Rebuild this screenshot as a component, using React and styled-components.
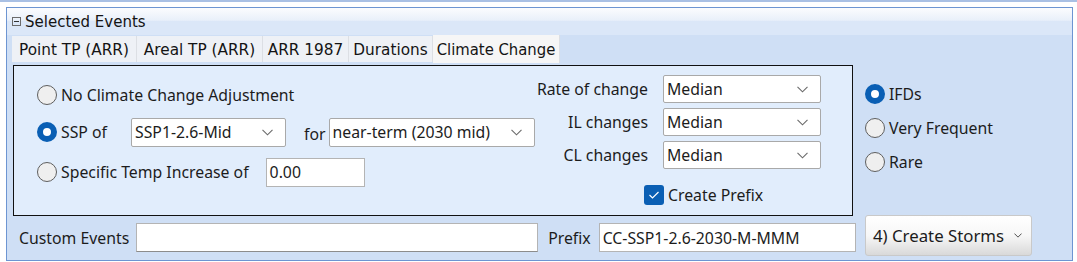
import React from "react";
import styled, { createGlobalStyle } from "styled-components";

const Global = createGlobalStyle`
  html, body { margin: 0; padding: 0; background: #ffffff; }
  body { font-family: "Noto Sans", "Liberation Sans", sans-serif; color: #1c1c1c; }
`;

const Page = styled.div`
  width: 1077px;
  height: 262px;
  border-top: 2px solid #a9c0e4;
  box-sizing: border-box;
  padding: 5px 4px 0 6px;
`;

const Panel = styled.div`
  border: 1px solid #6d95d2;
  height: 254px;
  box-sizing: border-box;
  display: flex;
  flex-direction: column;
  background: #cfdff5;
`;

const Header = styled.div`
  height: 27px;
  display: flex;
  align-items: center;
  gap: 4px;
  padding-left: 5px;
  background: linear-gradient(#fbfcfe 0%, #e9f0fa 45%, #dbe7f8 50%, #dbe7f8 100%);
  font-family: "DejaVu Sans", sans-serif;
  font-size: 15px;
  color: #141414;
`;

const Collapse = styled.span`
  width: 7px;
  height: 7px;
  border: 1px solid #6b6b6b;
  position: relative;
  &::after {
    content: "";
    position: absolute;
    left: 1px;
    right: 1px;
    top: 3px;
    height: 1px;
    background: #333;
  }
`;

const Body = styled.div`
  flex: 1;
  display: flex;
  padding: 1px 0 0 5px;
`;

const Main = styled.div`
  width: 844px;
  display: flex;
  flex-direction: column;
`;

const Tabs = styled.div`
  display: flex;
  height: 26px;
  align-items: stretch;
`;

const Tab = styled.div`
  display: flex;
  align-items: center;
  justify-content: center;
  padding-top: 1px;
  width: ${(p) => p.$w}px;
  box-sizing: border-box;
  font-family: ${(p) => (p.$active ? '"DejaVu Sans Condensed", "DejaVu Sans", sans-serif' : '"DejaVu Sans", sans-serif')};
  font-size: ${(p) => (p.$active ? "16.5px" : "15.3px")};
  background: ${(p) => (p.$active ? "#f6f6f6" : "#eef1f6")};
  border-right: 1px solid #dcdfe4;
  margin-top: ${(p) => (p.$active ? "-1px" : "0")};
  margin-bottom: ${(p) => (p.$active ? "-1px" : "0")};
  color: #141414;
`;

const Box = styled.div`
  margin-top: 3px;
  margin-left: 1px;
  width: 840px;
  height: 151px;
  box-sizing: border-box;
  border: 1.5px solid #111;
  background: #e1edfc;
  display: flex;
  justify-content: space-between;
  font-size: 15.8px;
`;

const LeftOptions = styled.div`
  padding: 14px 0 0 23px;
  display: flex;
  flex-direction: column;
`;

const OptionRow = styled.div`
  display: flex;
  align-items: center;
  height: 30px;
  margin-top: ${(p) => p.$mt || 0}px;
`;

const RadioLabel = styled.label`
  display: flex;
  align-items: center;
  gap: 4px;
  width: ${(p) => (p.$w ? `${p.$w}px` : "auto")};
  margin-right: ${(p) => p.$mr || 0}px;
  white-space: nowrap;
`;

const RadioDot = styled.span`
  width: 20px;
  height: 20px;
  border-radius: 50%;
  box-sizing: border-box;
  flex: none;
  background: ${(p) => (p.$checked ? "#ffffff" : "#efefef")};
  border: ${(p) => (p.$checked ? "6px solid #0a5fb4" : "1px solid #5e5e5e")};
`;

const Select = styled.div`
  width: ${(p) => p.$w}px;
  height: ${(p) => p.$h || 29}px;
  box-sizing: border-box;
  background: #fff;
  border: 1px solid #a9a9a9;
  border-radius: 2px;
  display: flex;
  align-items: center;
  justify-content: space-between;
  padding: 0 12px 0 3px;
  white-space: nowrap;
`;

const TextInput = styled.div`
  width: ${(p) => p.$w}px;
  height: 29px;
  box-sizing: border-box;
  background: #fff;
  border: 1px solid #b4b4b4;
  border-bottom-color: ${(p) => (p.$sunken ? "#8c8c8c" : "#b4b4b4")};
  display: flex;
  align-items: center;
  padding: 0 3px;
  white-space: nowrap;
`;

const ForText = styled.span`
  margin: 4px 3px 0 18px;
`;

const RightOptions = styled.div`
  padding: 9px 31px 0 0;
  display: grid;
  grid-template-columns: auto 158px;
  grid-auto-rows: 28px;
  row-gap: 5px;
  column-gap: 15px;
  align-items: center;
  align-content: start;
`;

const FieldLabel = styled.span`
  justify-self: end;
  white-space: nowrap;
`;

const CheckRow = styled.label`
  grid-column: 2;
  margin: 13px 0 0 -19px;
  display: flex;
  align-items: center;
  gap: 4px;
  white-space: nowrap;
`;

const CheckBox = styled.span`
  width: 20px;
  height: 20px;
  border-radius: 3px;
  background: #0a5fb4;
  display: flex;
  align-items: center;
  justify-content: center;
`;

const BottomRow = styled.div`
  display: flex;
  align-items: center;
  margin-top: 7px;
  font-size: 15.8px;
`;

const BottomLabel = styled.span`
  margin: 0 ${(p) => p.$mr}px 0 ${(p) => p.$ml}px;
  white-space: nowrap;
`;

const Side = styled.div`
  flex: 1;
  display: flex;
  flex-direction: column;
  justify-content: space-between;
  padding: 47px 0 4px 9px;
  font-size: 15.8px;
`;

const SideRadios = styled.div`
  display: flex;
  flex-direction: column;
  gap: 12px;
`;

const Button = styled.div`
  width: 167px;
  height: 41px;
  box-sizing: border-box;
  border: 1px solid #c9c9c9;
  border-radius: 3px;
  background: linear-gradient(#ffffff 0%, #f7f7f7 50%, #d9d9d9 100%);
  display: flex;
  align-items: center;
  justify-content: space-between;
  padding: 0 9px 1px 7px;
  font-size: 16.8px;
  margin-top: 1px;
`;

const Chevron = ({ color = "#6a6a6a", w = 11, h = 7 }) => (
  <svg width={w} height={h} viewBox="0 0 11 7">
    <polyline points="0.5,0.8 5.5,5.8 10.5,0.8" fill="none" stroke={color} strokeWidth="1.1" />
  </svg>
);

const Radio = ({ checked, children, w, mr }) => (
  <RadioLabel $w={w} $mr={mr}>
    <RadioDot $checked={checked} />
    {children}
  </RadioLabel>
);

export default function App() {
  return (
    <>
      <Global />
      <Page>
        <Panel>
          <Header>
            <Collapse />
            Selected Events
          </Header>
          <Body>
            <Main>
              <Tabs>
                <Tab $w={125}>Point TP (ARR)</Tab>
                <Tab $w={126}>Areal TP (ARR)</Tab>
                <Tab $w={86}>ARR 1987</Tab>
                <Tab $w={84}>Durations</Tab>
                <Tab $w={127} $active>Climate Change</Tab>
              </Tabs>
              <Box>
                <LeftOptions>
                  <OptionRow>
                    <Radio>No Climate Change Adjustment</Radio>
                  </OptionRow>
                  <OptionRow $mt={7}>
                    <Radio checked w={94}>SSP of</Radio>
                    <Select $w={155}>
                      SSP1-2.6-Mid
                      <Chevron />
                    </Select>
                    <ForText>for</ForText>
                    <Select $w={206}>
                      near-term (2030 mid)
                      <Chevron />
                    </Select>
                  </OptionRow>
                  <OptionRow $mt={10}>
                    <Radio mr={17}>Specific Temp Increase of</Radio>
                    <TextInput $w={99}>0.00</TextInput>
                  </OptionRow>
                </LeftOptions>
                <RightOptions>
                  <FieldLabel>Rate of change</FieldLabel>
                  <Select $w={158} $h={28}>
                    Median
                    <Chevron />
                  </Select>
                  <FieldLabel>IL changes</FieldLabel>
                  <Select $w={158} $h={28}>
                    Median
                    <Chevron />
                  </Select>
                  <FieldLabel>CL changes</FieldLabel>
                  <Select $w={158} $h={28}>
                    Median
                    <Chevron />
                  </Select>
                  <CheckRow>
                    <CheckBox>
                      <svg width="12" height="10" viewBox="0 0 12 10">
                        <polyline points="1.5,5 4.5,8 10.5,2" fill="none" stroke="#fff" strokeWidth="1.2" />
                      </svg>
                    </CheckBox>
                    Create Prefix
                  </CheckRow>
                </RightOptions>
              </Box>
              <BottomRow>
                <BottomLabel $ml={7} $mr={7}>Custom Events</BottomLabel>
                <TextInput $w={403} $sunken />
                <BottomLabel $ml={10} $mr={8}>Prefix</BottomLabel>
                <TextInput $w={258}>CC-SSP1-2.6-2030-M-MMM</TextInput>
              </BottomRow>
            </Main>
            <Side>
              <SideRadios>
                <Radio checked>IFDs</Radio>
                <Radio>Very Frequent</Radio>
                <Radio>Rare</Radio>
              </SideRadios>
              <Button>
                4) Create Storms
                <Chevron color="#222" w={8} h={5} />
              </Button>
            </Side>
          </Body>
        </Panel>
      </Page>
    </>
  );
}
